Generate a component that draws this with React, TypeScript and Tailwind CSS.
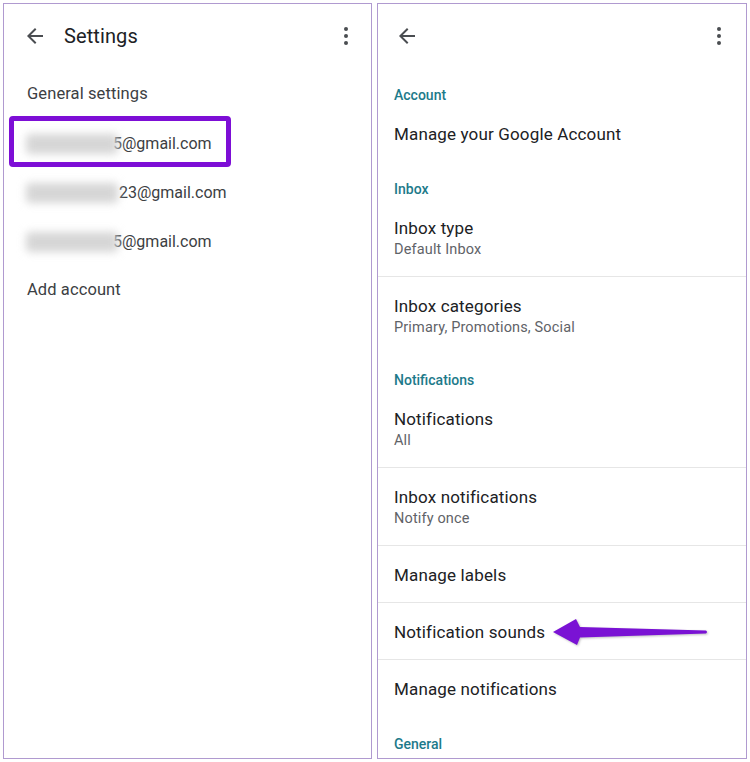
import React from "react";

const BackIcon = () => (
  <svg width="24" height="24" viewBox="0 0 24 24" className="text-[#4a4d51]">
    <path fill="currentColor" d="M20 11H7.83l5.59-5.59L12 4l-8 8 8 8 1.41-1.41L7.83 13H20v-2z" />
  </svg>
);

const MoreIcon = () => (
  <svg width="24" height="24" viewBox="0 0 24 24" className="text-[#4a4d51]">
    <circle cx="12" cy="5" r="2" fill="currentColor" />
    <circle cx="12" cy="12" r="2" fill="currentColor" />
    <circle cx="12" cy="19" r="2" fill="currentColor" />
  </svg>
);

const EmailRow = ({ tail, highlight, tuck }: { tail: string; highlight?: boolean; tuck?: boolean }) => (
  <div className="relative h-[49px] flex items-center pl-[22px]">
    <div className="relative z-10 w-[92px] h-[20px] shrink-0 rounded-[4px] bg-[#d6d6d6] blur-[4px]" />
    <span className={(tuck ? "-ml-[5px] " : "ml-[1px] ") + "text-[16px] text-[#3c4043] leading-[22px]"}>{tail}</span>
    {highlight && (
      <div className="absolute left-[5px] top-[-3px] w-[222px] h-[51px] border-[5px] border-[#7d0ed6] rounded-[4px]" />
    )}
  </div>
);

const Header = ({ children, tight }: { children: React.ReactNode; tight?: boolean }) => (
  <div className={tight ? "pt-[16px] pl-[16px]" : "pt-[18px] pl-[16px]"}>
    <div className="text-[14px] leading-[20px] font-medium text-[#1d7a8a]">{children}</div>
  </div>
);

const Row = ({ title, sub, divider }: { title: string; sub?: string; divider?: boolean }) => (
  <div className={divider ? "border-b border-[#e6e6e6]" : ""}>
    <div className="pl-[16px] pt-[18px] pb-[16px]">
      <div className="text-[17px] tracking-[0.15px] leading-[22px] text-[#202124]">{title}</div>
      {sub && (
        <div className="mt-[1px] text-[14.5px] tracking-[0.15px] leading-[20px] text-[#5f6368]">{sub}</div>
      )}
    </div>
  </div>
);

export default function App() {
  return (
    <div className="relative w-[750px] h-[762px] bg-white font-[Roboto,sans-serif] pl-[3px] pt-[3px] flex gap-[5px]">
      {/* Left panel */}
      <div className="w-[369px] h-[756px] border border-[#b09ad0] overflow-hidden flex flex-col">
        <div className="h-[63px] flex items-center pl-[19px] pr-[13px]">
          <BackIcon />
          <span className="ml-[17px] text-[20px] tracking-[0.1px] text-[#202124]">Settings</span>
          <div className="ml-auto">
            <MoreIcon />
          </div>
        </div>
        <div className="pt-[3px]">
          <div className="h-[49px] flex items-center pl-[23px] text-[16.5px] tracking-[0.1px] text-[#3c4043]">
            General settings
          </div>
          <EmailRow tail="5@gmail.com" highlight tuck />
          <EmailRow tail="23@gmail.com" />
          <EmailRow tail="5@gmail.com" tuck />
          <div className="h-[49px] flex items-center pl-[23px] text-[16.5px] tracking-[0.1px] text-[#3c4043]">
            Add account
          </div>
        </div>
      </div>

      {/* Right panel */}
      <div className="w-[370px] h-[756px] border border-[#b09ad0] overflow-hidden flex flex-col">
        <div className="h-[63px] shrink-0 flex items-center pl-[17px] pr-[15px]">
          <BackIcon />
          <div className="ml-auto">
            <MoreIcon />
          </div>
        </div>
        <Header>Account</Header>
        <Row title="Manage your Google Account" />
        <Header>Inbox</Header>
        <Row title="Inbox type" sub="Default Inbox" divider />
        <Row title="Inbox categories" sub="Primary, Promotions, Social" />
        <Header tight>Notifications</Header>
        <Row title="Notifications" sub="All" divider />
        <Row title="Inbox notifications" sub="Notify once" divider />
        <Row title="Manage labels" divider />
        <Row title="Notification sounds" divider />
        <Row title="Manage notifications" />
        <Header>General</Header>
      </div>

      {/* Annotation arrow */}
      <svg
        className="absolute left-[545px] top-[612px] drop-shadow-[1px_1px_1px_rgba(0,0,0,0.25)]"
        width="170"
        height="40"
        viewBox="0 0 170 40"
      >
        <path
          fill="#7a12d4"
          d="M8 20 L31 7 L35 15 L161 18.5 Q163 20 161 21.5 L35 25.5 L32 33 Z"
        />
      </svg>
    </div>
  );
}
